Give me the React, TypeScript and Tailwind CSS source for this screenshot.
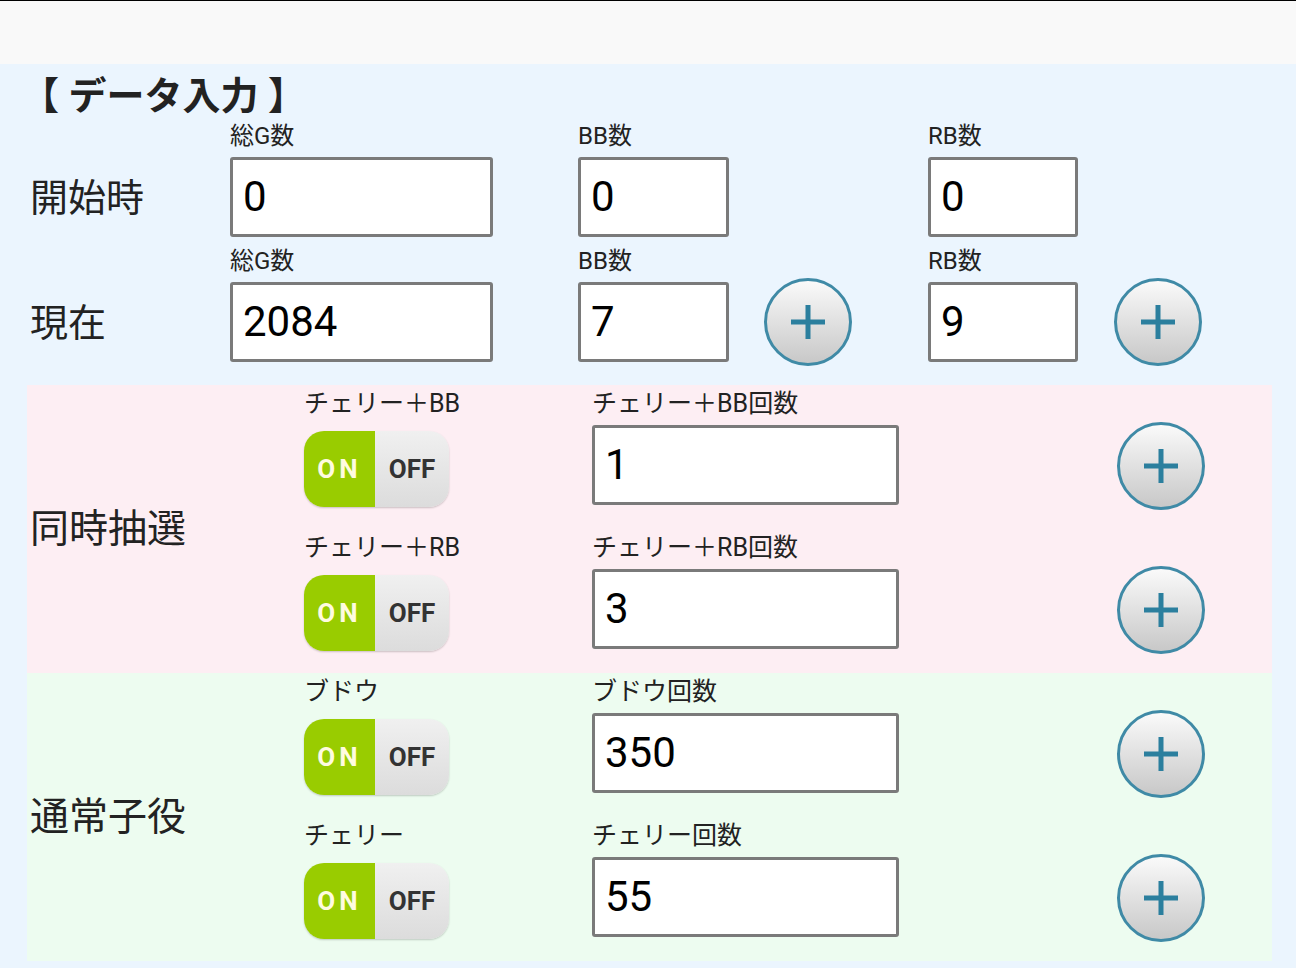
import React from "react";

const F = { fontFamily: '"Roboto","Noto Sans CJK JP",sans-serif' };

function Input({ v, w }: { v: string; w: string }) {
  return (
    <div className={`${w} h-[80px] bg-white border-[3px] border-[#7a7a7a] rounded-[3px] flex items-center pl-[10px] text-[42px] text-black leading-none`}>{v}</div>
  );
}

function Plus() {
  return (
    <div className="w-[88px] h-[88px] rounded-full border-[3px] border-[#3f8aa6] bg-gradient-to-b from-[#fafafa] to-[#c8c8c8] flex items-center justify-center">
      <svg width="40" height="40" viewBox="0 0 40 40"><path d="M20 3V37M3 20H37" stroke="#2b7f9e" strokeWidth="5" /></svg>
    </div>
  );
}

function Toggle() {
  return (
    <div className="w-[145px] h-[76px] rounded-[20px] overflow-hidden flex shadow-[0_1px_2px_rgba(0,0,0,0.2)]">
      <div className="w-[71px] bg-[#99cc00] flex items-center justify-center text-[#fffbe0] font-bold text-[26px] tracking-[4px]">ON</div>
      <div className="flex-1 bg-gradient-to-b from-[#f0f0f0] to-[#dcdcdc] flex items-center justify-center text-[#333] font-bold text-[26px]">OFF</div>
    </div>
  );
}

function Sub({ a, b, v }: { a: string; b: string; v: string }) {
  return (
    <div className="h-[144px] flex">
      <div className="w-[289px] pl-[277px] flex flex-col">
        <div className="h-[44px] text-[25px] whitespace-nowrap">{a}</div>
        <div className="mt-[2px]"><Toggle /></div>
      </div>
      <div className="ml-[276px] flex flex-col">
        <div className="h-[40px] text-[25px] whitespace-nowrap">{b}</div>
        <Input v={v} w="w-[307px]" />
      </div>
      <div className="ml-[218px] mt-[37px]"><Plus /></div>
    </div>
  );
}

function Section({ title, bg, rows }: { title: string; bg: string; rows: [string, string, string][] }) {
  return (
    <div className={`relative mx-[27px] w-[1245px] ${bg}`}>
      <div className="absolute left-[3px] top-0 bottom-0 flex items-center text-[39px]">{title}</div>
      {rows.map((r, i) => (
        <Sub key={i} a={r[0]} b={r[1]} v={r[2]} />
      ))}
    </div>
  );
}

export default function App() {
  return (
    <div style={F} className="w-[1296px] h-[968px] bg-[#ebf5fe] text-[#222] overflow-hidden">
      <div className="h-[64px] bg-[#f9f9f9] border-t border-black" />
      <div className="pl-[21px] pt-[8px] h-[56px] text-[38px] font-bold leading-[48px]">【 データ入力 】</div>
      {[["開始時", "0", "0", "0", false], ["現在", "2084", "7", "9", true]].map((r, i) => (
        <div key={i} className={`flex ${i === 0 ? "h-[125px]" : "h-[140px]"}`}>
          <div className="w-[230px] pl-[30px] pt-[50px] text-[38px]">{r[0] as string}</div>
          <div className="w-[348px]">
            <div className="h-[37px] text-[24px] leading-[32px]">総G数</div>
            <Input v={r[1] as string} w="w-[263px]" />
          </div>
          <div className="w-[186px]">
            <div className="h-[37px] text-[24px] leading-[32px]">BB数</div>
            <Input v={r[2] as string} w="w-[151px]" />
          </div>
          <div className="w-[164px] pt-[33px]">{r[4] ? <Plus /> : null}</div>
          <div className="w-[186px]">
            <div className="h-[37px] text-[24px] leading-[32px]">RB数</div>
            <Input v={r[3] as string} w="w-[150px]" />
          </div>
          <div className="pt-[33px]">{r[4] ? <Plus /> : null}</div>
        </div>
      ))}
      <div>
        <Section title="同時抽選" bg="bg-[#fdeef3]" rows={[["チェリー＋BB", "チェリー＋BB回数", "1"], ["チェリー＋RB", "チェリー＋RB回数", "3"]]} />
        <Section title="通常子役" bg="bg-[#edfcf0]" rows={[["ブドウ", "ブドウ回数", "350"], ["チェリー", "チェリー回数", "55"]]} />
      </div>
    </div>
  );
}
